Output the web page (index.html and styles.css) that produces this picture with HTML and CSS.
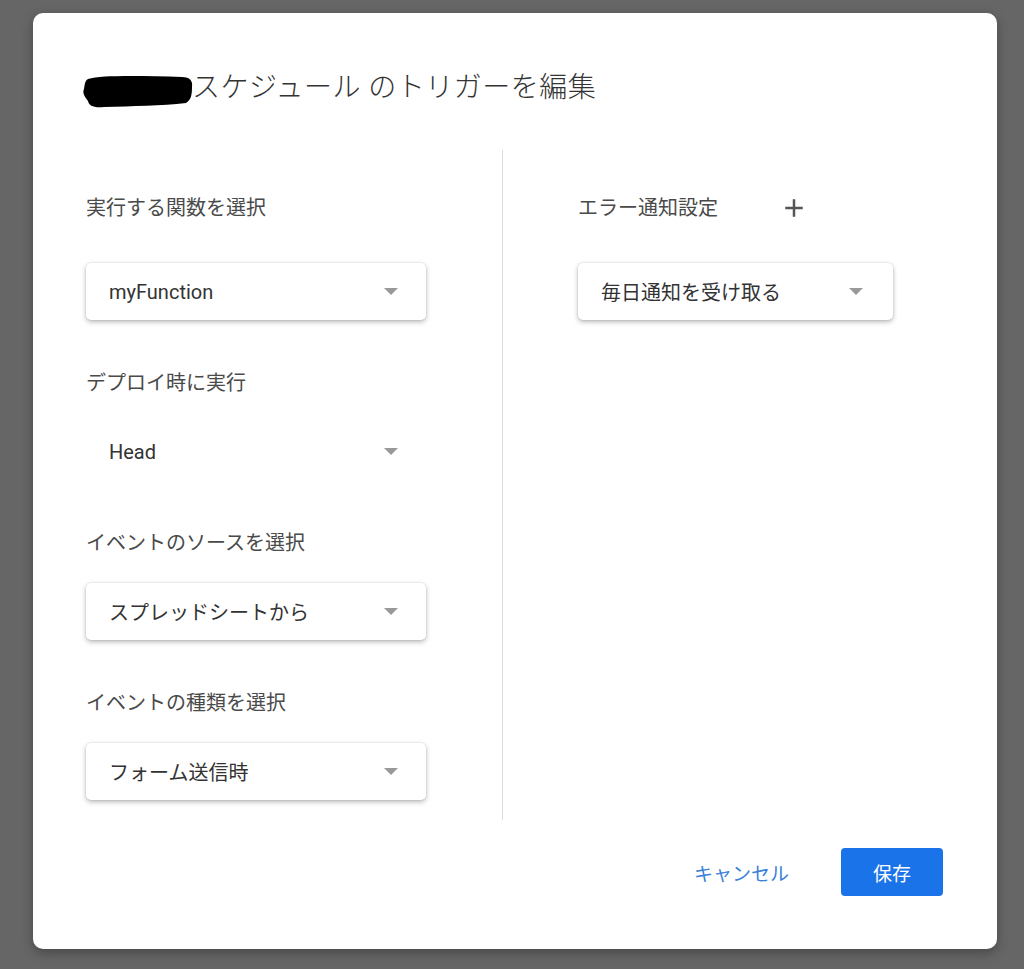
FILE: index.html
```html
<!DOCTYPE html>
<html lang="ja">
<head>
  <meta charset="UTF-8" />
  <meta name="viewport" content="width=device-width, initial-scale=1.0"/>
  <title>トリガーを編集</title>
  <link rel="stylesheet" href="styles.css">
</head>
<body>

  <div class="dialog">
    <h1 class="dialog-title">
      <svg class="redact" width="112" height="36" viewBox="0 0 112 36">
        <path d="M6 6 C20 2 60 3 100 4 C108 4 111 8 110 14 C110 22 109 27 104 30 C80 33 50 33 22 34 C12 35 7 33 6 28 C3 24 0 20 2 16 C3 10 3 8 6 6 Z" fill="#000"/>
      </svg>スケジュール のトリガーを編集
    </h1>

    <div class="columns">
      <div class="col col-left">
        <div class="field field-first">
          <div class="field-label">実行する関数を選択</div>
          <div class="select">
            <span>myFunction</span>
            <span class="arrow"></span>
          </div>
        </div>
        <div class="field">
          <div class="field-label">デプロイ時に実行</div>
          <div class="select flat">
            <span>Head</span>
            <span class="arrow"></span>
          </div>
        </div>
        <div class="field">
          <div class="field-label">イベントのソースを選択</div>
          <div class="select">
            <span>スプレッドシートから</span>
            <span class="arrow"></span>
          </div>
        </div>
        <div class="field">
          <div class="field-label">イベントの種類を選択</div>
          <div class="select">
            <span>フォーム送信時</span>
            <span class="arrow"></span>
          </div>
        </div>
      </div>

      <div class="col col-right">
        <div class="field field-first">
          <div class="field-label">
            エラー通知設定
            <svg class="add-icon" width="30" height="30" viewBox="0 0 24 24">
              <path d="M19 13h-6v6h-2v-6H5v-2h6V5h2v6h6v2z" fill="#555"/>
            </svg>
          </div>
          <div class="select narrow">
            <span>毎日通知を受け取る</span>
            <span class="arrow"></span>
          </div>
        </div>
      </div>
    </div>

    <div class="dialog-actions">
      <button class="btn-text">キャンセル</button>
      <button class="btn-primary">保存</button>
    </div>
  </div>

</body>
</html>
```

FILE: styles.css
```css
body {
  margin: 0;
  padding: 13px 27px 20px 33px;
  background-color: #666;
  font-family: Roboto, "Noto Sans CJK JP", sans-serif;
  color: #444;
}

.dialog {
  background-color: #fff;
  border-radius: 10px;
  height: 936px;
  box-sizing: border-box;
  padding: 57px 54px 0 49px;
  box-shadow: 0 4px 12px rgba(0,0,0,0.3);
}

.dialog-title {
  margin: 0;
  font-size: 28px;
  line-height: 36px;
  font-weight: 300;
  letter-spacing: 0.5px;
  color: #333;
  display: flex;
  align-items: center;
  height: 36px;
}

.redact {
  display: block;
  margin-right: -2px;
  margin-top: 6px;
}

.columns {
  display: flex;
  margin-top: 44px;
  height: 670px;
}

.col {
  box-sizing: border-box;
  padding-top: 44px;
}

.col-left {
  width: 420px;
  padding-left: 4px;
}

.col-right {
  border-left: 1px solid #dadce0;
  padding-left: 75px;
  flex: 1;
}

.field {
  margin-top: 49px;
}

.field-first {
  margin-top: 0;
}

.field-label {
  font-size: 20px;
  line-height: 28px;
  height: 28px;
  color: #4a4a4a;
  display: flex;
  align-items: center;
  margin-bottom: 26px;
}

.field-first .field-label {
  margin-bottom: 41px;
}

.add-icon {
  margin: -1px 0 -1px 61px;
}

.select {
  width: 340px;
  height: 57px;
  box-sizing: border-box;
  padding: 0 28px 0 23px;
  display: flex;
  align-items: center;
  justify-content: space-between;
  border-radius: 5px;
  background-color: #fff;
  box-shadow: 0 2px 5px rgba(0,0,0,0.28), 0 0 2px rgba(0,0,0,0.12);
  font-size: 20px;
  color: #333;
}

.select.flat {
  box-shadow: none;
}

.select.narrow {
  width: 315px;
  padding-right: 30px;
}

.arrow {
  width: 0;
  height: 0;
  border-left: 7px solid transparent;
  border-right: 7px solid transparent;
  border-top: 7px solid #999;
}

.dialog-actions {
  display: flex;
  justify-content: flex-end;
  align-items: center;
  margin-top: 28px;
}

.btn-text {
  background: transparent;
  border: none;
  font-family: Roboto, "Noto Sans CJK JP", sans-serif;
  font-size: 19px;
  color: #3a7fd8;
  padding: 0;
  margin-right: 52px;
  cursor: pointer;
}

.btn-primary {
  width: 102px;
  height: 48px;
  background-color: #1a73e8;
  color: #fff;
  border: none;
  border-radius: 4px;
  font-family: Roboto, "Noto Sans CJK JP", sans-serif;
  font-size: 19px;
  cursor: pointer;
}
```
